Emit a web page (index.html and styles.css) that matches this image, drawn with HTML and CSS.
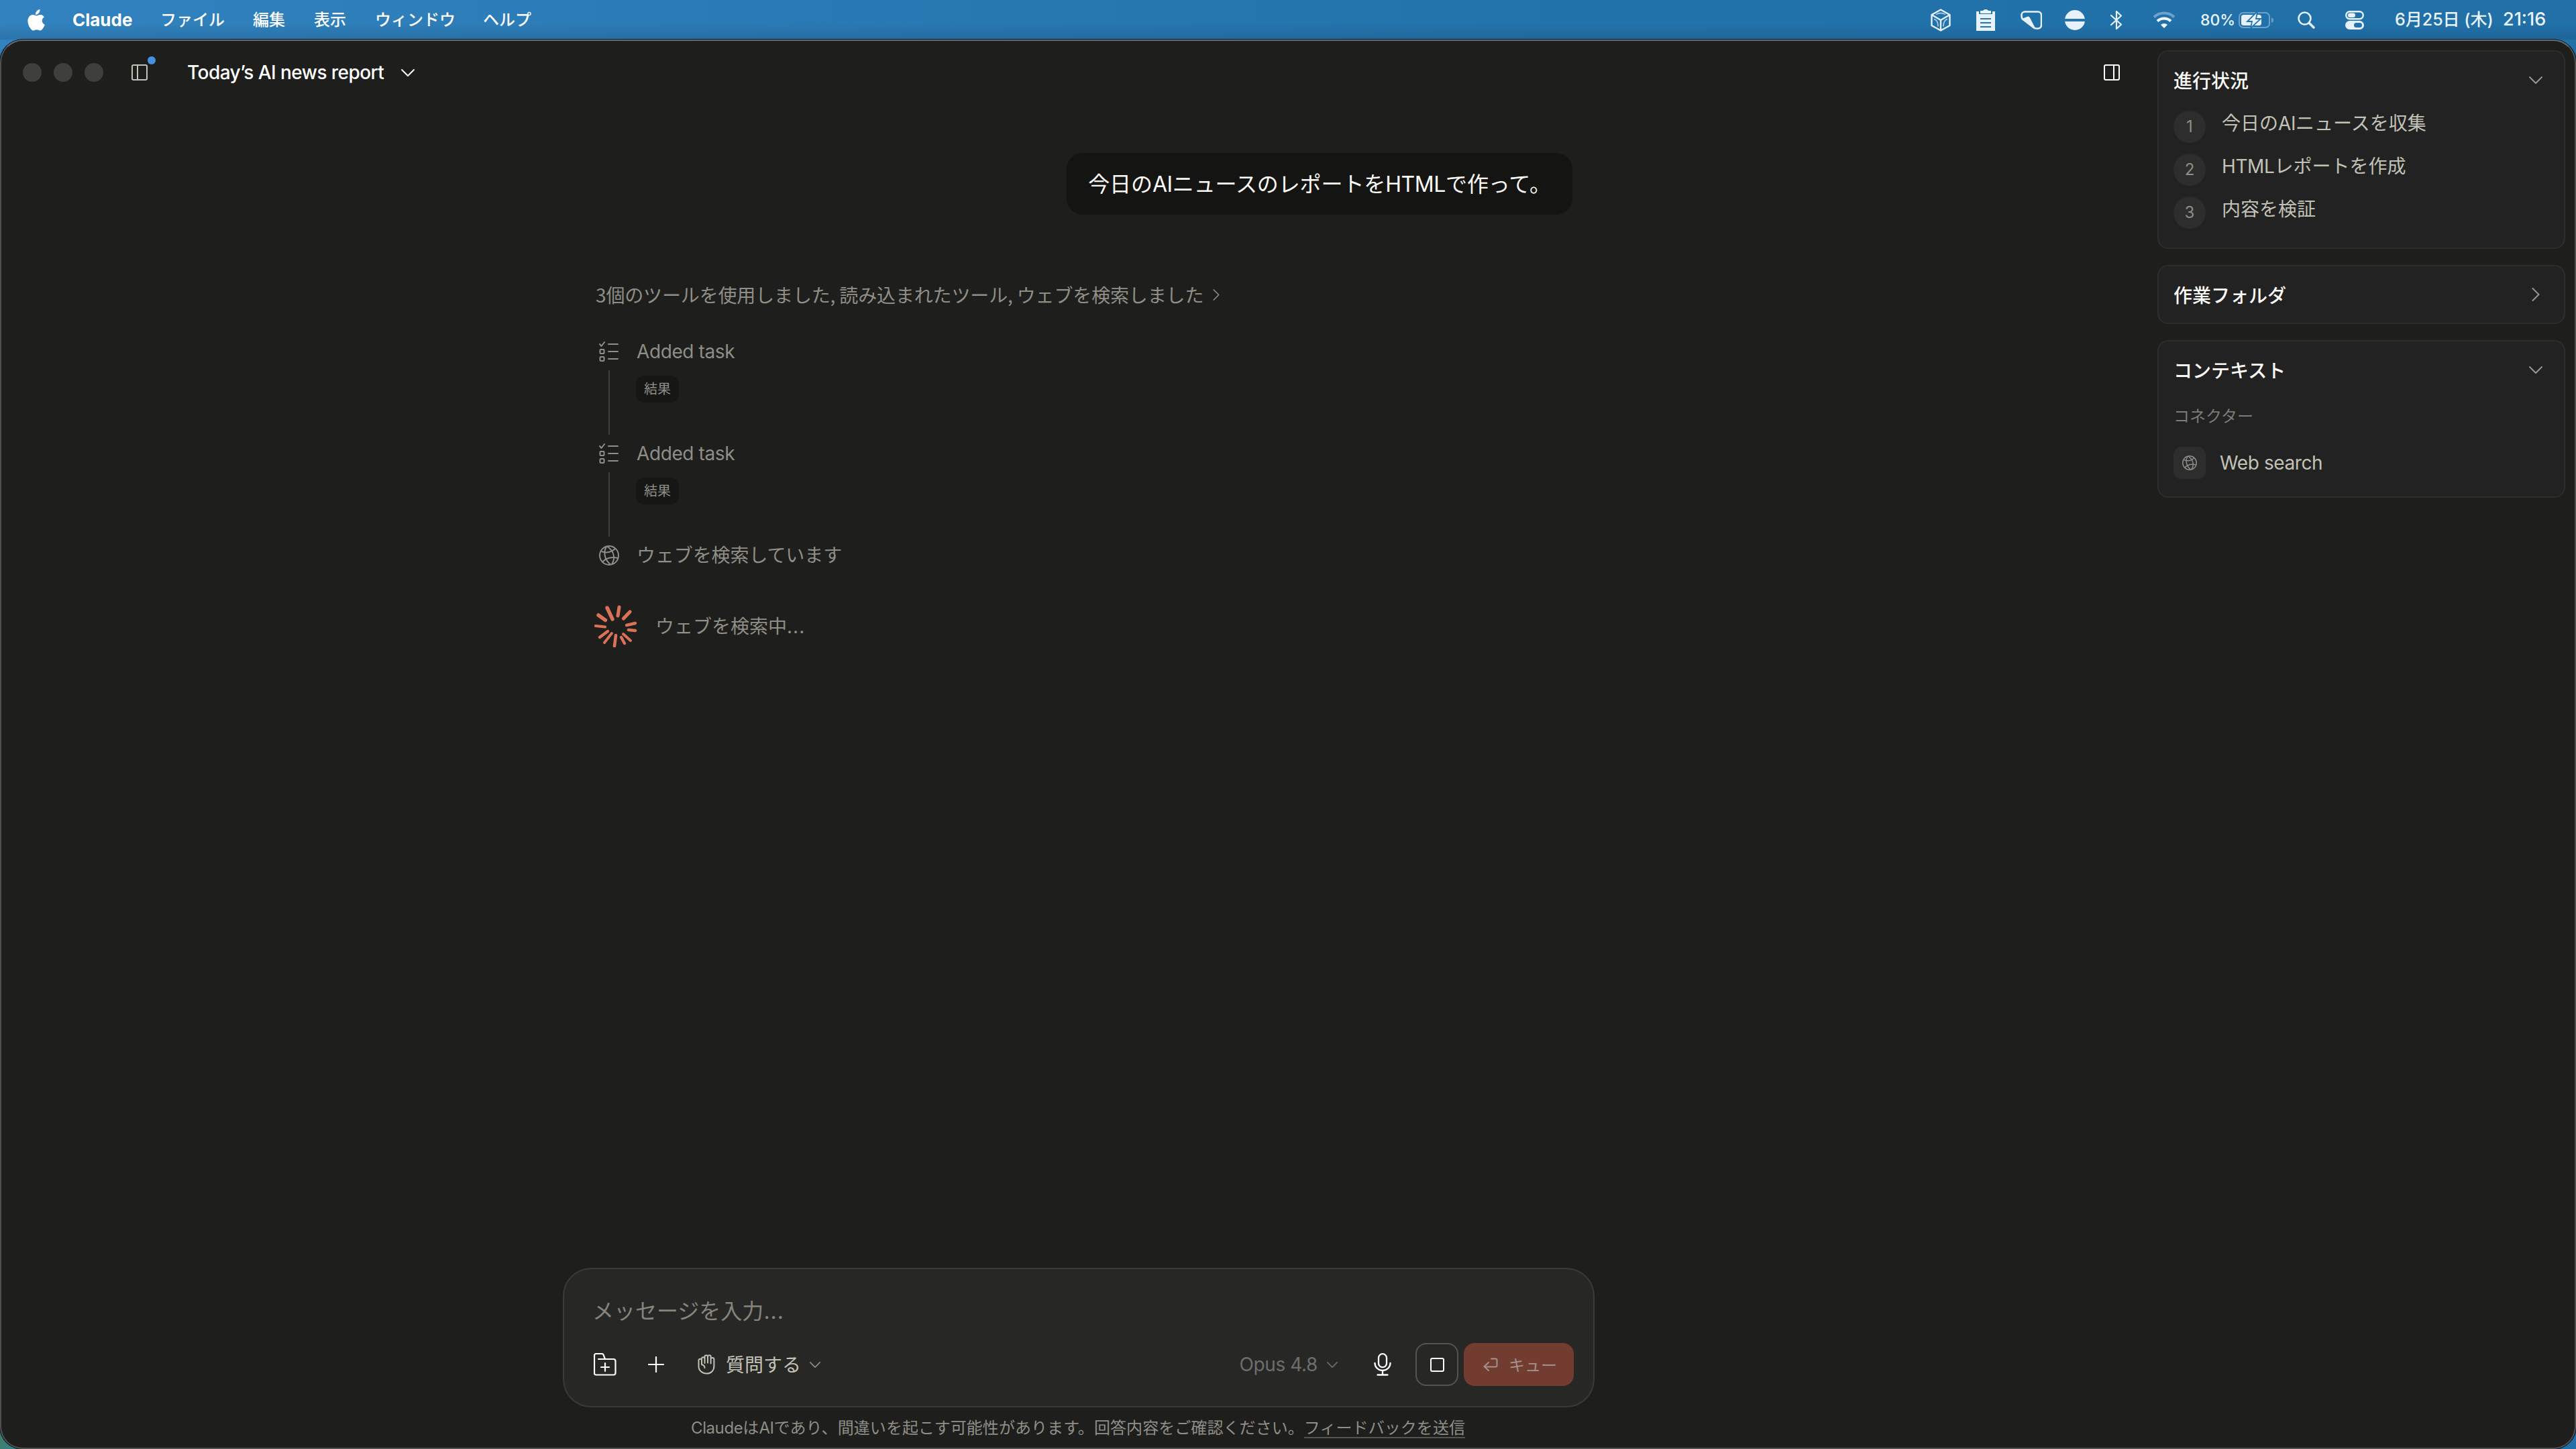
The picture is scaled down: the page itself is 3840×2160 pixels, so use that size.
FILE: index.html
```html
<!DOCTYPE html>
<html lang="ja">
<head>
    <meta charset="UTF-8">
    <meta name="viewport" content="width=device-width, initial-scale=1.0">
    <title>Claude</title>
    <link rel="stylesheet" href="styles.css">
</head>
<body>
    <!-- shared icons -->
    <svg class="sprite" width="0" height="0">
        <symbol id="chevron" viewBox="0 0 20 11">
            <path d="M1 1l9 9 9-9" fill="none" stroke="currentColor" stroke-width="2" stroke-linecap="round" stroke-linejoin="round"/>
        </symbol>
        <symbol id="chevron-right" viewBox="0 0 12 20">
            <path d="M1.500 1l9 9-9 9" fill="none" stroke="currentColor" stroke-width="2" stroke-linecap="round" stroke-linejoin="round"/>
        </symbol>
        <symbol id="globe" viewBox="0 0 30 30">
            <g fill="none" stroke="currentColor" stroke-width="2">
                <circle cx="15" cy="15" r="14"/>
                <path d="M11 2C6 10 8 21 17 28.500M12.500 2C22 8 25 19 19 28M3.500 9C11 12 19 10 24 5M5.500 24.500C11 18 20 17 28.500 19"/>
            </g>
        </symbol>
        <symbol id="tasks" viewBox="0 0 30 30">
            <g fill="none" stroke="currentColor" stroke-width="2" stroke-linecap="round" stroke-linejoin="round">
                <path d="M1 4l2.500 3L8 1M14 4h14M14 15h14M14 26h14"/>
                <rect x="1.500" y="12" width="6" height="6" rx="1"/>
                <rect x="1.500" y="23" width="6" height="6" rx="1"/>
            </g>
        </symbol>
    </svg>

    <div class="menubar">
        <div class="menu-left">
            <svg class="apple" viewBox="0 0 26 32" width="26" height="32">
                <path fill="#fff" d="M18.500 0c.3 2.200-.6 4.200-1.800 5.600-1.200 1.400-3 2.400-4.700 2.300-.3-2 .7-4.100 1.800-5.300C15 1.200 17 .1 18.500 0zM25 11.500c-2 1.200-3.300 3-3.300 5.300 0 2.700 1.600 4.900 4.100 5.900-.6 1.900-1.500 3.600-2.600 5.200-1.300 1.900-2.500 3.600-4.500 3.600s-2.600-1.200-5-1.200-3.100 1.200-5 1.300c-2 0-3.500-2-4.900-4C1 23.500-1 16.500 1.700 12c1.400-2.400 3.800-3.900 6.300-3.900 2.100 0 3.800 1.300 5.300 1.300 1.400 0 3.400-1.500 6-1.400 1.900.1 4.200 1 5.700 3.500z"/>
            </svg>
            <span class="app-name">Claude</span>
            <span class="menu m1">ファイル</span>
            <span class="menu m2">編集</span>
            <span class="menu m3">表示</span>
            <span class="menu m4">ウィンドウ</span>
            <span class="menu m5">ヘルプ</span>
        </div>
        <div class="menu-right">
            <svg viewBox="0 0 30 34" width="30" height="34" class="cube">
                <g fill="none" stroke="#e6f1fa" stroke-linejoin="round">
                    <path stroke-width="2.400" d="M15 1.500l13.500 7.500v16L15 32.500 1.500 25V9zM1.500 9L15 17l13.500-8M15 17v15"/>
                    <path stroke-width="2" opacity=".65" d="M8 8.500q7-4 14 0M5 15.500c4 1 6 5 6 11M25 15.500c-4 1-6 5-6 11"/>
                </g>
            </svg>
            <svg viewBox="0 0 28 32" width="28" height="32" class="clipboard">
                <path fill="#e6f1fa" d="M0 3h4v4h20V3h4v29H0z"/>
                <path fill="#e6f1fa" d="M6 6V2h4c1-1.500 2-2 4-2s3 .5 4 2h4v4z"/>
                <path d="M6 14h16M6 20h16M6 26h16" stroke="#2877b0" stroke-width="2"/>
            </svg>
            <svg viewBox="0 0 32 28" width="32" height="28" class="tag">
                <path fill="none" stroke="#e6f1fa" stroke-width="2.500" stroke-linejoin="round" d="M6 1.500h20a5 5 0 0 1 5 5v15a5 5 0 0 1-5 5h-3c-2 0-3.500-1-5-2.500L3 12.500C1.500 11 1.500 10 1.500 6.500a5 5 0 0 1 4.500-5z"/>
                <path fill="#e6f1fa" d="M2 12l9-3.500q2 0 3 2L22 26l-5-3z"/>
            </svg>
            <svg viewBox="0 0 30 30" width="30" height="30" class="disc">
                <circle cx="15" cy="15" r="15" fill="#e6f1fa"/>
                <path d="M0 15h30" stroke="#2676ae" stroke-width="4"/>
            </svg>
            <svg viewBox="0 0 18 28" width="18" height="28" class="bluetooth">
                <path d="M1 7l15 13.500L9 27V1l7 6.500L1 21" fill="none" stroke="#e6f1fa" stroke-width="2.200" stroke-linejoin="round" stroke-linecap="round"/>
            </svg>
            <svg viewBox="0 0 34 26" width="34" height="26" class="wifi">
                <path d="M2 8.500a22 22 0 0 1 30 0" fill="none" stroke="#6ba3cd" stroke-width="4"/>
                <path d="M7 14.500a14.500 14.500 0 0 1 20 0" fill="none" stroke="#f0f7fc" stroke-width="4"/>
                <path d="M17 25l-5-5a7.500 7.500 0 0 1 10 0z" fill="#f0f7fc"/>
            </svg>
            <span class="percent">80%</span>
            <svg viewBox="0 0 52 26" width="52" height="26" class="battery">
                <rect x="1" y="2" width="45" height="22" rx="6" fill="none" stroke="#6ba3cd" stroke-width="2"/>
                <path d="M49 9q3 1 3 4t-3 4z" fill="#6ba3cd"/>
                <rect x="4" y="5" width="30" height="16" rx="3.500" fill="#e6f1fa"/>
                <path d="M27 1L13 15h7l-2 10 15-14h-7l2-10z" fill="#e6f1fa" stroke="#2575ae" stroke-width="1.800"/>
            </svg>
            <svg viewBox="0 0 26 26" width="26" height="26" class="search">
                <circle cx="10.500" cy="10.500" r="9" fill="none" stroke="#e6f1fa" stroke-width="2.600"/>
                <path d="M17 17l7 7" stroke="#e6f1fa" stroke-width="3.500" stroke-linecap="round"/>
            </svg>
            <svg viewBox="0 0 28 28" width="28" height="28" class="control">
                <rect x="1.200" y="1.200" width="25.600" height="11" rx="5.500" fill="none" stroke="#e6f1fa" stroke-width="2.400"/>
                <rect x="4" y="3.500" width="11" height="6.500" rx="3.200" fill="#e6f1fa"/>
                <rect y="15" width="28" height="13" rx="6.500" fill="#e6f1fa"/>
                <rect x="13" y="18" width="12" height="7" rx="3.500" fill="#2473ac"/>
            </svg>
            <span class="date">6月25日 (木)</span>
            <span class="time">21:16</span>
        </div>
    </div>

    <div class="window">
        <div class="main">
            <div class="titlebar">
                <span class="light"></span>
                <span class="light"></span>
                <span class="light"></span>
                <div class="sidebar-toggle">
                    <svg viewBox="0 0 24 24" width="24" height="24">
                        <path d="M3 1h18a2 2 0 0 1 2 2v18a2 2 0 0 1-2 2H3a2 2 0 0 1-2-2V3a2 2 0 0 1 2-2zM9 1v22" fill="none" stroke="#c3c2b7" stroke-width="2"/>
                    </svg>
                    <span class="dot"></span>
                </div>
                <span class="title">Today’s AI news report</span>
                <svg class="title-chevron" width="20" height="11"><use href="#chevron"/></svg>
                <svg class="panel-toggle" viewBox="0 0 24 24" width="24" height="24">
                    <path d="M3 1h18a2 2 0 0 1 2 2v18a2 2 0 0 1-2 2H3a2 2 0 0 1-2-2V3a2 2 0 0 1 2-2zM15 1v22" fill="none" stroke="#fff" stroke-width="2"/>
                </svg>
            </div>

            <div class="chat">
                <div class="bubble">今日の<span class="en">AI</span>ニュースのレポートを<span class="en">HTML</span>で作って。</div>
                <div class="summary">
                    <span class="summary-text">3個のツールを使用しました, 読み込まれたツール, ウェブを検索しました</span>
                    <svg width="10" height="17"><use href="#chevron-right"/></svg>
                </div>
                <div class="step">
                    <div class="rail">
                        <svg width="30" height="30"><use href="#tasks"/></svg>
                        <span class="line"></span>
                    </div>
                    <div class="step-body">
                        <div class="step-name en">Added task</div>
                        <span class="badge">結果</span>
                    </div>
                </div>
                <div class="step">
                    <div class="rail">
                        <svg width="30" height="30"><use href="#tasks"/></svg>
                        <span class="line"></span>
                    </div>
                    <div class="step-body">
                        <div class="step-name en">Added task</div>
                        <span class="badge">結果</span>
                    </div>
                </div>
                <div class="step last">
                    <div class="rail">
                        <svg width="30" height="30"><use href="#globe"/></svg>
                    </div>
                    <div class="step-body">
                        <div class="step-name jp">ウェブを検索しています</div>
                    </div>
                </div>
                <div class="working">
                    <svg viewBox="0 0 64 64" width="64" height="64">
                        <g fill="none" stroke="#d97257" stroke-linecap="round">
                            <path stroke-width="5.500" d="M19 5l8 17"/>
                            <path stroke-width="5" d="M37 4l-2 13"/>
                            <path stroke-width="5.200" d="M53 11l-9.500 10"/>
                            <path stroke-width="4.400" d="M61 28l-13 3"/>
                            <path stroke-width="4.600" d="M61 39l-10-1"/>
                            <path stroke-width="4" d="M54 54L43 44"/>
                            <path stroke-width="4.400" d="M45 58l-5-9"/>
                            <path stroke-width="4.600" d="M30 62l2-16"/>
                            <path stroke-width="4" d="M15 57l11-14"/>
                            <path stroke-width="4.400" d="M8 49l12-9"/>
                            <path stroke-width="4.200" d="M2 32l14 1.500"/>
                            <path stroke-width="5.500" d="M6 16l10.500 7.500"/>
                        </g>
                    </svg>
                    <span>ウェブを検索中<span class="dots">...</span></span>
                </div>
            </div>

            <div class="composer">
                <div class="placeholder">メッセージを入力<span class="dots">...</span></div>
                <div class="tools">
                    <svg class="folder" viewBox="0 0 34 34" width="34" height="34">
                        <path d="M7 9h22.500a3 3 0 0 1 3 3v17.500a3 3 0 0 1-3 3h-26a2.500 2.500 0 0 1-2.500-2.500V3.500A2.500 2.500 0 0 1 3.500 1h8.700a2.500 2.500 0 0 1 2.300 1.500L17 9M17 15v12M11 21h12" fill="none" stroke="#fff" stroke-width="2.200" stroke-linecap="round" stroke-linejoin="round"/>
                    </svg>
                    <svg class="plus" viewBox="0 0 24 24" width="24" height="24">
                        <path d="M12 1v22M1 12h22" stroke="#fff" stroke-width="2.200" stroke-linecap="round"/>
                    </svg>
                    <svg class="hand" viewBox="0 0 28 30" width="28" height="30">
                        <path d="M10.500 13V4.500a2.200 2.200 0 0 1 4.500-1.500v9.500M15 12.500V3a2.200 2.200 0 0 1 4.600 1v9.500M19.600 13.500V7.500a2.200 2.200 0 0 1 4.800 0v10C24.400 24 20 28.500 13.500 28.500S1.500 24 1.500 18V9.500a2.200 2.200 0 0 1 4.500-1M6 13V6.500a2.200 2.200 0 0 1 4.500 0M6 12.500v2.500c3 .8 4.500 2.500 4.500 5" fill="none" stroke="#c3c2b7" stroke-width="2" stroke-linecap="round" stroke-linejoin="round"/>
                    </svg>
                    <span class="mode">質問する</span>
                    <svg class="mode-chevron" width="16" height="9"><use href="#chevron"/></svg>
                    <span class="model en">Opus 4.8</span>
                    <svg class="model-chevron" width="16" height="9"><use href="#chevron"/></svg>
                    <svg class="mic" viewBox="0 0 26 34" width="26" height="34">
                        <path d="M13 1.200a6 6 0 0 1 6 6v8a6 6 0 0 1-12 0v-8a6 6 0 0 1 6-6zM1.500 15a11.500 11 0 0 0 23 0M13 26v6.500M5.500 32.500h15" fill="none" stroke="#fff" stroke-width="2.300" stroke-linecap="round"/>
                    </svg>
                    <span class="stop"><span class="stop-square"></span></span>
                    <span class="queue">
                        <svg viewBox="0 0 22 20" width="22" height="20">
                            <path d="M12 1.500h6.500a2 2 0 0 1 2 2v8a2 2 0 0 1-2 2H2M8 7l-6.500 6L8 19" fill="none" stroke="#a3918b" stroke-width="2" stroke-linecap="round" stroke-linejoin="round"/>
                        </svg>
                        <span>キュー</span>
                    </span>
                </div>
            </div>
            <div class="footnote"><span class="en">Claude</span>は<span class="en">AI</span>であり、間違いを起こす可能性があります。回答内容をご確認ください。<span class="feedback">フィードバックを送信</span></div>
        </div>

        <div class="side">
            <div class="card progress">
                <div class="card-head">
                    <span>進行状況</span>
                    <svg width="20" height="11"><use href="#chevron"/></svg>
                </div>
                <div class="todo"><span class="num">1</span><span>今日の<span class="en">AI</span>ニュースを収集</span></div>
                <div class="todo"><span class="num">2</span><span><span class="en">HTML</span>レポートを作成</span></div>
                <div class="todo"><span class="num">3</span><span>内容を検証</span></div>
            </div>
            <div class="card folder-card">
                <div class="card-head">
                    <span>作業フォルダ</span>
                    <svg class="right" width="12" height="20"><use href="#chevron-right"/></svg>
                </div>
            </div>
            <div class="card context">
                <div class="card-head">
                    <span>コンテキスト</span>
                    <svg width="20" height="11"><use href="#chevron"/></svg>
                </div>
                <div class="group">コネクター</div>
                <div class="connector">
                    <span class="tile"><svg width="22" height="22"><use href="#globe"/></svg></span>
                    <span class="en">Web search</span>
                </div>
            </div>
        </div>
    </div>
</body>
</html>
```
FILE: styles.css
```css
* {
    box-sizing: border-box;
}

body {
    margin: 0;
    width: 3840px;
    height: 2160px;
    overflow: hidden;
    display: flex;
    flex-direction: column;
    background:
        linear-gradient(90deg, #3f7d6e, transparent 60px) 0 100% / 100% 80px no-repeat,
        linear-gradient(90deg, #3182be, #2272ab 60%, #2170a8);
    color: #fff;
    font-family: "Noto Sans CJK JP", sans-serif;
    font-size: 28px;
    line-height: 40px;
    white-space: nowrap;
}

svg {
    display: block;
    flex: none;
}

.sprite {
    position: absolute;
}

.en {
    font-family: Inter, "Noto Sans CJK JP", sans-serif;
    letter-spacing: -0.4px;
}

.dots {
    font-family: Inter, sans-serif;
    letter-spacing: 1px;
}

/* menu bar */
.menubar {
    height: 59px;
    flex: none;
    display: flex;
    justify-content: space-between;
    align-items: center;
    padding: 0 37px 0 41px;
    font-size: 24px;
    font-weight: 500;
    background: linear-gradient(180deg, transparent 60%, rgba(20, 50, 80, 0.18));
}

.menu-left,
.menu-right {
    display: flex;
    align-items: center;
}

.apple {
    margin-right: 41px;
}

.app-name {
    width: 131px;
    font-family: Inter, sans-serif;
    font-weight: 700;
    font-size: 26px;
}

.menu {
    padding-bottom: 3px;
}

.m1 { width: 138px; }
.m2 { width: 91px; }
.m3 { width: 91px; }
.m4 { width: 161px; }

.menu-right {
    color: #eaf4fc;
    font-family: Inter, "Noto Sans CJK JP", sans-serif;
}

.cube { margin-right: 38px; }
.clipboard { margin-right: 38px; }
.tag { margin-right: 34px; }
.disc { margin-right: 38px; }
.bluetooth { margin-right: 45px; }
.wifi { margin-right: 37px; }

.percent {
    width: 57px;
    font-size: 23px;
}

.battery { margin-right: 36px; }
.search { margin-right: 45px; }
.control { margin-right: 46px; }

.date {
    width: 161px;
    padding-bottom: 2px;
    font-size: 25px;
}

.time {
    width: 72px;
    padding-bottom: 2px;
    font-size: 27px;
}

/* window */
.window {
    flex: 1;
    display: flex;
    border: 2px solid #50514f;
    border-top-color: #5f6a72;
    border-radius: 34px;
    background: #1e1e1c;
    box-shadow: 0 0 0 1px #0b1a26;
}

.main {
    width: 3214px;
    display: flex;
    flex-direction: column;
}

.titlebar {
    height: 94px;
    flex: none;
    display: flex;
    align-items: center;
    padding-left: 32px;
    margin-bottom: 73px;
}

.light {
    width: 28px;
    height: 28px;
    margin-right: 18px;
    border-radius: 50%;
    background: #3f3f3d;
}

.sidebar-toggle {
    position: relative;
    margin: 0 59px 0 24px;
}

.dot {
    position: absolute;
    top: -12px;
    right: -12px;
    width: 12px;
    height: 12px;
    border-radius: 50%;
    background: #4a90e2;
}

.title {
    width: 319px;
    font-family: Inter, sans-serif;
    font-weight: 500;
    letter-spacing: -0.55px;
}

.panel-toggle {
    margin-left: auto;
    margin-right: 56px;
}

/* conversation */
.chat {
    width: 1456px;
    flex: 1;
    margin-left: 886px;
    display: flex;
    flex-direction: column;
    color: #8f8e87;
}

.bubble {
    align-self: flex-end;
    height: 92px;
    padding: 0 32px;
    margin-bottom: 99px;
    border-radius: 24px;
    background: #141413;
    color: #faf9f5;
    font-size: 32px;
    line-height: 89px;
    letter-spacing: -0.1px;
}

.summary {
    display: flex;
    align-items: center;
    gap: 14px;
    height: 40px;
    margin-bottom: 45px;
    letter-spacing: -0.15px;
}

.step {
    display: flex;
    height: 152px;
}

.last {
    height: 93px;
}

.rail {
    width: 30px;
    margin: 5px 26px 0 5px;
    display: flex;
    flex-direction: column;
    align-items: center;
}

.jp {
    margin-top: -2px;
    letter-spacing: -0.1px;
}

.line {
    width: 2px;
    height: 96px;
    margin-top: 13px;
    background: #3e3e3b;
}

.badge {
    display: block;
    width: 64px;
    height: 40px;
    margin-top: 16px;
    margin-left: -1px;
    border-radius: 12px;
    background: #161615;
    font-size: 20px;
    line-height: 38px;
    text-align: center;
}

.working {
    display: flex;
    align-items: center;
    gap: 27px;
    margin-left: -2px;
}

/* message box */
.composer {
    width: 1538px;
    height: 208px;
    flex: none;
    margin-left: 837px;
    padding: 40px 29px 0 42px;
    border: 2px solid #3a3a37;
    border-radius: 42px;
    background: #272725;
}

.placeholder {
    height: 40px;
    margin-bottom: 30px;
    color: #85847d;
    font-size: 32px;
}

.tools {
    display: flex;
    align-items: center;
    height: 64px;
    padding-left: 2px;
}

.folder { margin-right: 47px; }
.plus { margin-right: 50px; }
.hand { margin-right: 14px; }

.mode {
    padding-bottom: 2px;
    margin-right: 13px;
    color: #c3c2b7;
}

.mode-chevron {
    color: #8f8e87;
}

.model {
    margin-left: auto;
    margin-right: 14px;
    color: #6f6e69;
}

.model-chevron {
    margin-right: 54px;
    color: #6f6e69;
}

.mic {
    margin-right: 36px;
}

.stop {
    display: flex;
    align-items: center;
    justify-content: center;
    width: 64px;
    height: 64px;
    margin-right: 8px;
    border: 2px solid #555451;
    border-radius: 16px;
}

.stop-square {
    width: 21px;
    height: 21px;
    border: 2px solid #fff;
    border-radius: 3px;
}

.queue {
    display: flex;
    align-items: center;
    gap: 16px;
    width: 164px;
    height: 64px;
    padding-left: 29px;
    border-radius: 16px;
    background: #733c30;
    color: #a3918b;
    font-size: 24px;
}

.footnote {
    align-self: flex-start;
    height: 32px;
    margin: 13px 0 15px 1028px;
    color: #8f8e87;
    font-size: 24px;
    line-height: 32px;
    letter-spacing: 0.07px;
}

.feedback {
    display: inline-block;
    height: 33px;
    border-bottom: 2px solid #555450;
}

/* right panels */
.side {
    width: 608px;
    padding-top: 14px;
    display: flex;
    flex-direction: column;
    gap: 24px;
}

.card {
    padding: 22px;
    border: 2px solid #2d2d2c;
    border-radius: 16px;
    background: #222222;
    color: #c3c2b7;
}

.progress { height: 296px; }
.folder-card { height: 88px; }
.context { height: 235px; }

.card-head {
    display: flex;
    align-items: center;
    justify-content: space-between;
    height: 40px;
    padding-right: 10px;
    color: #faf9f5;
    font-weight: 500;
}

.card-head svg {
    color: #97968f;
}

.card-head .right {
    margin-right: 4px;
}

.progress .card-head {
    margin-bottom: 23px;
}

.todo {
    display: flex;
    gap: 24px;
    height: 64px;
}

.num {
    width: 48px;
    height: 48px;
    margin-top: 3px;
    border-radius: 50%;
    background: #2d2d2d;
    color: #8f8e87;
    font-family: Inter, sans-serif;
    font-size: 24px;
    line-height: 48px;
    text-align: center;
}

.group {
    margin: 28px 0 27px;
    color: #7d7c76;
    font-size: 24px;
    line-height: 40px;
}

.connector {
    display: flex;
    align-items: center;
    gap: 21px;
}

.tile {
    display: flex;
    align-items: center;
    justify-content: center;
    width: 48px;
    height: 48px;
    border-radius: 12px;
    background: #2d2d2d;
    color: #8f8e87;
}
```
